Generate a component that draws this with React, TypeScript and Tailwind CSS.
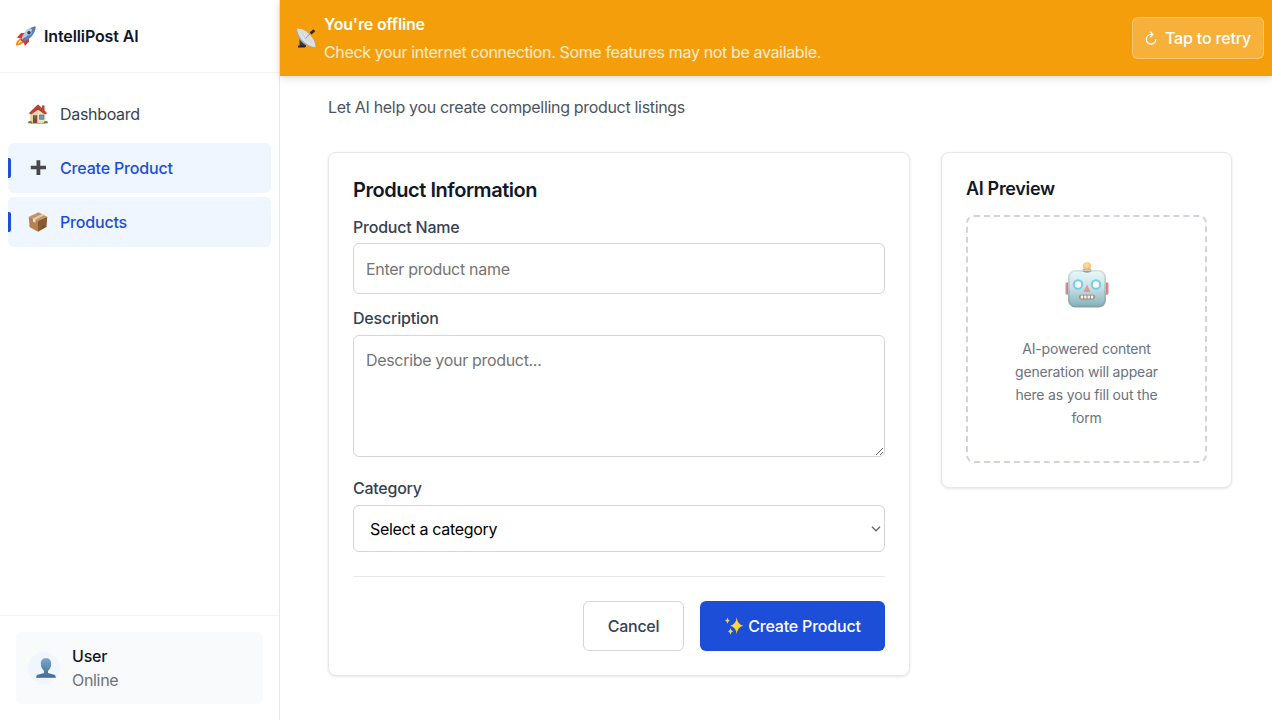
import type { ReactNode } from 'react';

function Rocket({ className }: { className?: string }) {
  return (
    <svg viewBox="0 0 20 20" className={className}>
      <path d="M1 11.5 5 7h5l-4 6z" fill="#e8302a" />
      <path d="M8 13.5l5-3v5L9 20 7.500 16z" fill="#e8302a" />
      <path d="M0 19.500c0-4 2-6.500 5-6.500s3.500 2 2.500 3.500-4.500 3-7.500 3z" fill="#f08a24" />
      <path d="M2 18c.5-3 2-4 3.500-4.500L7 15z" fill="#ffe76a" />
      <path d="M5.500 13C7 7 12 1.500 19.500.5 19.500 8 14 13 8 15.500z" fill="#4a86cc" />
      <path d="M5.500 13C7 7 12 1.500 19.500.5L7 14.500z" fill="#a9cdf0" />
      <path d="M14.500 2.200Q17 .8 19.500.5q0 2.500-1 5z" fill="#73777d" />
      <path d="M5 12.500l3.500 3.200-1.300.8L4.400 14z" fill="#a83e34" />
      <circle cx="13" cy="6.700" r="2.200" fill="#39424f" stroke="#dce7f2" strokeWidth=".7" />
      <path d="M6 13.500l4-3-2 4z" fill="#e64238" />
    </svg>
  );
}

function House({ className }: { className?: string }) {
  return (
    <svg viewBox="0 0 20 20" className={className}>
      <path d="M14 1.500h2.500v6H14z" fill="#a8482f" />
      <path d="M2.500 9L10 2l7.500 7v10h-15z" fill="#f3dfba" />
      <path d="M2.500 9L10 2v17H2.500z" fill="#ead0a3" />
      <path d="M1 9L9.500.8h1L19 9l-1 1.200L10 5l-8 5.200z" fill="#c23f31" />
      <path d="M10 4.200l7.500 5.800-.6.500L10 5.400l-6.900 5.100-.6-.5z" fill="#8c352a" />
      <path d="M5 11.300h4.200V19H5z" fill="#82492c" />
      <path d="M6 12.300h2.200v2H6z" fill="#497ca5" />
      <path d="M11.500 11h4.300v4.300h-4.300z" fill="#5a9dcc" stroke="#8c6448" strokeWidth=".7" />
      <ellipse cx="2.100" cy="18.300" rx="2" ry="1.300" fill="#65863a" />
      <ellipse cx="17.900" cy="18.300" rx="2" ry="1.300" fill="#65863a" />
      <path d="M3 18.900h14v.8H3z" fill="#a48b62" />
    </svg>
  );
}

function Plus({ className }: { className?: string }) {
  return (
    <svg viewBox="0 0 20 20" className={className}>
      <path d="M8.500 2.200h3.800v5.600h5.700v3.500h-5.700v5.700H8.500v-5.700H2.800V7.800h5.700z" fill="#48494b" />
    </svg>
  );
}

function Box({ className }: { className?: string }) {
  return (
    <svg viewBox="0 0 20 20" className={className}>
      <path d="M.8 4.800L10 8.500v11.300L1.500 15z" fill="#b9814f" />
      <path d="M19.200 4.800L10 8.500v11.300l8.500-4.800z" fill="#885b32" />
      <path d="M.8 4.800L10.500.3l8.700 4.500L10 9z" fill="#c59365" />
      <path d="M5 6.500l9-4.400 2.200 1.100-8.700 4.600z" fill="#dfcdb3" />
      <path d="M5 6.500l2.500 1.200v3L5 9.500z" fill="#eee2ce" />
      <path d="M14.500 14.500l1.200-.7M14.500 16l1.200-.7" stroke="#4b321f" strokeWidth=".7" />
    </svg>
  );
}

function Person({ className }: { className?: string }) {
  return (
    <svg viewBox="0 0 20 20" className={className}>
      <defs>
        <linearGradient id="person" x1="0" y1="0" x2="0" y2="1">
          <stop offset="0" stopColor="#7da7c9" />
          <stop offset="1" stopColor="#416a95" />
        </linearGradient>
      </defs>
      <path d="M10 .2c-3.500 0-5.200 2-5.200 5.300 0 3.800 1.500 6 3.200 7.200v2C7 16.200.2 15.500.2 19v.8h19.600V19c0-3.500-6.800-2.800-7.800-4.300v-2c1.700-1.200 3.200-3.400 3.200-7.200C15.200 2.200 13.500.2 10 .2z" fill="url(#person)" />
    </svg>
  );
}

function Dish({ className }: { className?: string }) {
  return (
    <svg viewBox="0 0 20 20" className={className}>
      <path d="M3.500 10l6.500 5v4H7.500l-2-2H3.500z" fill="#35383c" />
      <path d="M2 17.700q3-1.500 7 0v1.900H2z" fill="#25292d" />
      <path d="M.5.500C-.5 9 7.500 19.500 19 19.800c1-.5.800-3.800-.5-7C15 5 7-.5.500.500z" fill="#a4a7ab" />
      <path d="M1 .5C1.500 8.500 9 18 19.300 19.200 20 11.500 10.500.300 1 .5z" fill="#dfe0e2" />
      <path d="M2 1.500l12 13M5 2l6 11M10 4l6 12" stroke="#c3c6c9" strokeWidth=".4" />
      <path d="M9.500 10.500l6-6.500" stroke="#75787b" strokeWidth=".7" />
      <path d="M13.800 4.200l3.700-3 1.700 2-3.600 3.200z" fill="#27292b" />
    </svg>
  );
}

function Robot({ className }: { className?: string }) {
  return (
    <svg viewBox="0 0 44 46" className={className}>
      <defs>
        <linearGradient id="face" x1="0" y1="0" x2="0" y2="1">
          <stop offset="0" stopColor="#e7f8f8" />
          <stop offset=".45" stopColor="#cbe1e6" />
          <stop offset="1" stopColor="#85b1ba" />
        </linearGradient>
        <linearGradient id="rim" x1="0" y1="0" x2="0" y2="1">
          <stop offset="0" stopColor="#d4e3df" />
          <stop offset="1" stopColor="#82a3ac" />
        </linearGradient>
        <radialGradient id="bulb" cx=".45" cy=".4">
          <stop offset="0" stopColor="#fff0ad" />
          <stop offset="1" stopColor="#f5b869" />
        </radialGradient>
      </defs>
      <rect x=".5" y="20.500" width="4" height="12" rx="1.200" fill="#dd8c8d" />
      <rect x="39.500" y="20.500" width="4" height="12" rx="1.200" fill="#dd8c8d" />
      <path d="M2.700 20.500v12M41.300 21v12" stroke="#b7797f" strokeWidth=".7" />
      <path d="M16.500 9.500q0-2 3-2.500h5q3 .5 3 2.500-2 2-5.500 2t-5.500-2z" fill="#9a98bd" />
      <circle cx="22" cy="4.200" r="3.900" fill="url(#bulb)" />
      <rect x="3.900" y="8.900" width="36.200" height="35.600" rx="6.500" fill="url(#face)" stroke="url(#rim)" strokeWidth="1.800" />
      <path d="M16.500 8.800q5.500 4 11 0z" fill="#9a98bd" />
      <circle cx="13" cy="22.500" r="4.200" fill="#fff" stroke="#73cee4" strokeWidth="2" />
      <circle cx="31" cy="22.500" r="4.200" fill="#fff" stroke="#73cee4" strokeWidth="2" />
      <path d="M22 22.500l3.500 7.500h-7z" fill="#e59692" />
      <rect x="14" y="32.700" width="16" height="4.700" rx="2.300" fill="#90857f" />
      <path d="M15.700 33.500h2.500v3h-2.500zM19.200 33.500h2.300v3h-2.300zM22.500 33.500h2.300v3h-2.300zM25.800 33.500h2.500v3h-2.500z" fill="#fff5e7" />
    </svg>
  );
}

function Sparkles({ className }: { className?: string }) {
  return (
    <svg viewBox="0 0 20 20" className={className} fill="#fed33b">
      <path d="M12.700 1.500q.8 6.900 6.600 8.300-5.800 1.200-6.600 8.200-.8-7-6.600-8.200Q11.900 8.400 12.700 1.500z" />
      <path d="M3.500 1.500q.5 2.600 2.500 3.100-2 .5-2.500 3.200Q3 5.100 1 4.600q2-.5 2.500-3.100zM6.500 12.300q.5 2.700 2.500 3.200-2 .5-2.500 3.200-.5-2.700-2.500-3.200 2-.5 2.500-3.200z" />
    </svg>
  );
}

function NavItem({ icon, label, active }: { icon: ReactNode; label: string; active?: boolean }) {
  return (
    <a
      className={
        active
          ? 'relative flex h-[50px] items-center gap-3 rounded-md bg-[#eff6ff] pl-5 font-medium tracking-[-0.18px] text-[#1d4ed8]'
          : 'relative flex h-[50px] items-center gap-3 rounded-md pl-5 text-[#374151]'
      }
    >
      {active && <span className="absolute top-[15px] left-0 h-5 w-[3px] rounded-r-[2px] bg-[#1d4ed8]" />}
      {icon}
      <span>{label}</span>
    </a>
  );
}

function Sidebar() {
  return (
    <aside className="flex h-[720px] w-[280px] shrink-0 flex-col border-r border-[#e5e7eb] bg-white">
      <div className="flex h-[73px] items-center gap-2 border-b border-[#f3f4f6] px-4">
        <Rocket className="size-5" />
        <span className="font-semibold tracking-[-0.12px] text-[#0f172a]">IntelliPost AI</span>
      </div>
      <nav className="flex flex-1 flex-col gap-1 px-2 pt-4">
        <NavItem icon={<House className="size-5" />} label="Dashboard" />
        <NavItem icon={<Plus className="size-5" />} label="Create Product" active />
        <NavItem icon={<Box className="size-5" />} label="Products" active />
      </nav>
      <div className="border-t border-[#f3f4f6] p-4">
        <div className="flex h-[72px] items-center gap-3 rounded-md bg-[#f9fafb] px-3">
          <div className="flex size-8 items-center justify-center rounded-full bg-[#eff6ff] pl-1">
            <Person className="size-5" />
          </div>
          <div className="flex flex-col leading-6">
            <span className="font-medium tracking-[-0.2px] text-[#111827]">User</span>
            <span className="text-[#6b7280]">Online</span>
          </div>
        </div>
      </div>
    </aside>
  );
}

function Banner() {
  return (
    <div className="relative flex h-[76px] shrink-0 items-center justify-between bg-[#f59e0b] pr-2 pl-4 text-white shadow-[0_2px_8px_rgba(0,0,0,0.15)]">
      <div className="flex items-center gap-2">
        <Dish className="size-5" />
        <div className="flex flex-col gap-1 leading-6">
          <span className="font-semibold tracking-[-0.17px]">You're offline</span>
          <span className="tracking-[-0.36px] text-white/80">
            Check your internet connection. Some features may not be available.
          </span>
        </div>
      </div>
      <button className="flex h-[42px] w-[132px] items-center justify-center gap-2 rounded-md border border-white/30 bg-white/20 font-medium tracking-[-0.17px]">
        <svg viewBox="0 0 12 14" className="h-3.5 w-3" fill="none" stroke="currentColor" strokeWidth="1.200">
          <path d="M7.800 3.500H6A4.800 4.800 0 1 0 10.900 8.200" />
          <path d="M5.200.6L8 3.500 5.200 6.200" />
        </svg>
        <span>Tap to retry</span>
      </button>
    </div>
  );
}

function ProductForm() {
  return (
    <form className="flex h-[524px] w-[582px] flex-col rounded-lg border border-[#e5e7eb] bg-white px-6 pt-6 text-[#374151] shadow-[0_1px_3px_rgba(0,0,0,0.1)]">
      <h2 className="mb-3 text-xl leading-[26px] font-semibold tracking-[-0.45px] text-[#111827]">Product Information</h2>
      <label className="mb-1 leading-6 font-medium tracking-[-0.22px]">Product Name</label>
      <input
        placeholder="Enter product name"
        className="mb-3 h-[51px] rounded-md border border-[#d1d5db] px-3 tracking-[-0.3px] placeholder:text-[#757575]"
      />
      <label className="mb-[5px] leading-6 font-medium tracking-[-0.2px]">Description</label>
      <textarea
        placeholder="Describe your product..."
        className="mb-[19px] h-[122px] shrink-0 resize-y rounded-md border border-[#d1d5db] px-3 py-3 leading-6 tracking-[-0.32px] placeholder:text-[#757575]"
      />
      <label className="mb-[5px] leading-6 font-medium tracking-[-0.25px]">Category</label>
      <div className="flex h-[47px] items-center justify-between rounded-md border border-[#d1d5db] pr-[3px] pl-4 text-black">
        <span>Select a category</span>
        <svg viewBox="0 0 10 6" className="h-1.5 w-2.5" fill="none" stroke="#666" strokeWidth="1.300">
          <path d="M1 .8l4 4 4-4" />
        </svg>
      </div>
      <div className="mt-6 flex justify-end gap-4 border-t border-[#e5e7eb] pt-6">
        <button
          type="button"
          className="h-[50px] w-[101px] rounded-md border border-[#d1d5db] bg-white font-medium tracking-[-0.3px]"
        >
          Cancel
        </button>
        <button
          type="button"
          className="flex h-[50px] w-[185px] items-center justify-center gap-1 rounded-md bg-[#1d4ed8] font-medium tracking-[-0.2px] text-white"
        >
          <Sparkles className="size-5" />
          <span>Create Product</span>
        </button>
      </div>
    </form>
  );
}

function Preview() {
  return (
    <section className="flex h-[336px] w-[291px] flex-col rounded-lg border border-[#e5e7eb] bg-white px-6 pt-6 shadow-[0_1px_3px_rgba(0,0,0,0.1)]">
      <h3 className="text-lg leading-6 font-semibold tracking-[-0.33px] text-[#111827]">AI Preview</h3>
      <div className="mt-[14px] flex h-[248px] flex-col items-center rounded-lg border-2 border-dashed border-[#d1d5db] pt-[45px]">
        <Robot className="h-[46px] w-11" />
        <p className="mt-[29px] text-center text-sm leading-[23px] tracking-[-0.18px] text-[#6b7280]">
          AI-powered content
          <br />
          generation will appear
          <br />
          here as you fill out the
          <br />
          form
        </p>
      </div>
    </section>
  );
}

export default function App() {
  return (
    <div className="flex h-[724px] overflow-hidden bg-white font-['Inter','Liberation_Sans',sans-serif] text-base tracking-[-0.32px] whitespace-nowrap">
      <Sidebar />
      <main className="flex flex-1 flex-col">
        <Banner />
        <div className="flex flex-col pt-[19px] pl-12">
          <p className="leading-6 text-[#4b5563]">Let AI help you create compelling product listings</p>
          <div className="mt-[33px] flex items-start gap-[31px]">
            <ProductForm />
            <Preview />
          </div>
        </div>
      </main>
    </div>
  );
}
